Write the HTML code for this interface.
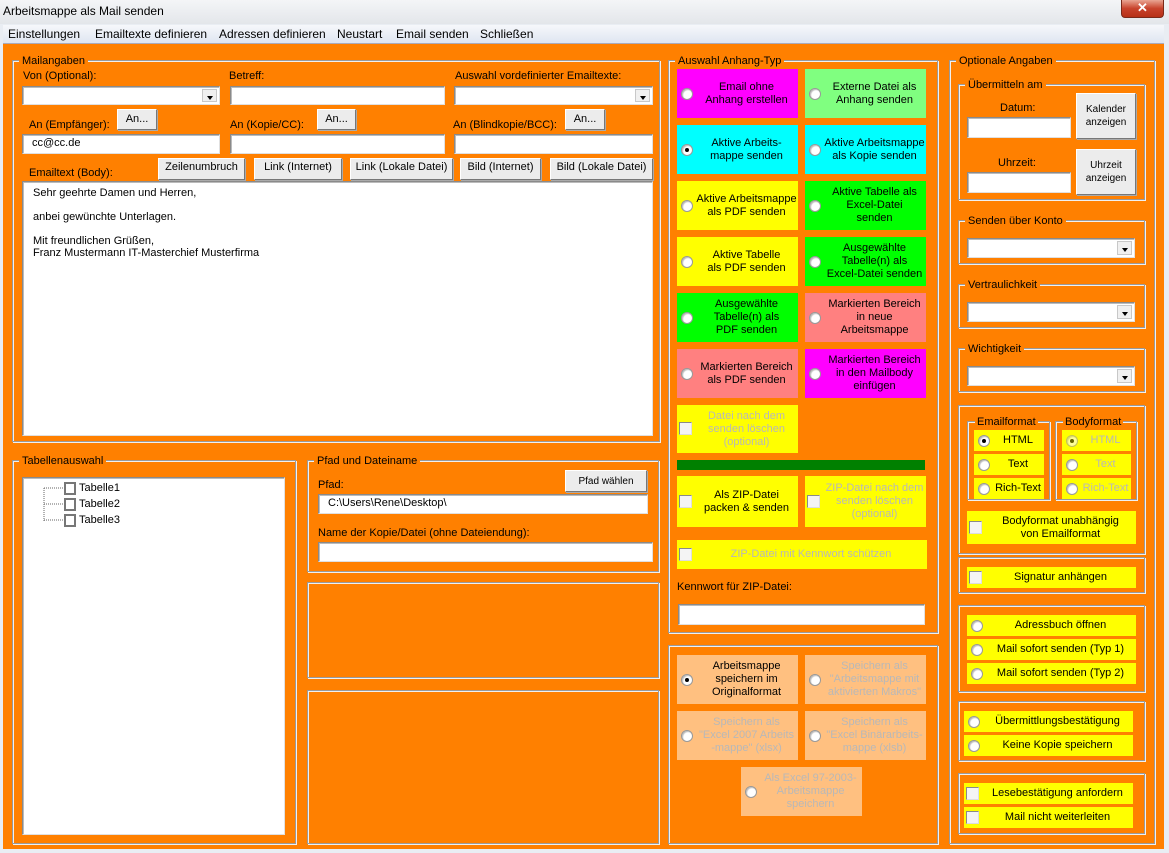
<!DOCTYPE html>
<html><head><meta charset="utf-8"><style>
*{box-sizing:border-box}
body{margin:0;width:1169px;height:853px;overflow:hidden;background:#e9edf3;font-family:"Liberation Sans",sans-serif;font-size:11px;color:#000;position:relative}
.a{position:absolute}
.title{left:0;top:0;width:1169px;height:24px;background:linear-gradient(#f4f5f7,#e3e6ea);}
.close{left:1121px;top:0;width:43px;height:18px;background:linear-gradient(#e9a593,#c8432c 50%,#b73017);border:1px solid #7a2a1a;border-top:none;border-radius:0 0 4px 4px;color:#fff;font-weight:bold;text-align:center;font-size:13px;line-height:16px}
.menu{left:3px;top:25px;width:1161px;height:19px;background:linear-gradient(#f6f8fb,#dfe6f1);border-bottom:1px solid #aab;font-size:12px;line-height:19px}
.menu span{position:absolute;top:0}
.main{left:3px;top:44px;width:1161px;height:805px;background:#ff8000}
.fs{position:absolute;border:1px solid #9a9a9a;box-shadow:inset 1px 1px 0 #f0f0f0,1px 1px 0 #f0f0f0}
.lg{position:absolute;background:#ff8000;padding:0 3px;line-height:12px;font-size:11px;top:-6px;left:6px;white-space:nowrap}
.in{position:absolute;background:#fff;border:1px solid #8a8a8a;border-right-color:#e0e0e0;border-bottom-color:#e0e0e0;box-shadow:inset 1px 1px 0 #bbb;padding-left:9px;line-height:17px}
.dd{position:absolute;right:2px;top:2px;bottom:2px;width:15px;background:#f0f0f0;border:1px solid #c8c8c8}
.dd:after{content:"";position:absolute;left:4px;top:6px;border:3px solid transparent;border-top:4px solid #000}
.bt{position:absolute;background:#ececec;border:1px solid #fff;border-right-color:#777;border-bottom-color:#777;box-shadow:1px 1px 0 #aaa;text-align:center;display:flex;align-items:center;justify-content:center;line-height:13px}
.t{position:absolute}
.tile{position:absolute;display:flex;align-items:center;text-align:center;line-height:13px}
.tile .x{flex:1;padding-left:18px}
.r{position:absolute;left:4px;top:50%;margin-top:-6px;width:12px;height:12px;border-radius:50%;background:#fff;border:1px solid #999;box-shadow:inset 1px 1px 1px #bbb}
.r.on:after{content:"";position:absolute;left:3px;top:3px;width:4px;height:4px;border-radius:50%;background:#000}
.c{position:absolute;left:2px;top:50%;margin-top:-7px;width:13px;height:13px;background:#f4f4f4;border:1px solid #8a8a8a;border-right-color:#ddd;border-bottom-color:#ddd}
.dis{color:#b8b8b8}
.m{background:#ff00ff}.g{background:#80ff80}.cy{background:#00ffff}.y{background:#ffff00}.gr{background:#00ff00}.p{background:#ff8080}.lo{background:#ffc080}
</style></head><body>
<div class="a title"><span class="a" style="left:3px;top:4px;font-size:12px">Arbeitsmappe als Mail senden</span></div>
<div class="a close">✕</div>
<div class="a menu"><span style="left:5px">Einstellungen</span><span style="left:92px">Emailtexte definieren</span><span style="left:216px">Adressen definieren</span><span style="left:334px">Neustart</span><span style="left:393px">Email senden</span><span style="left:477px">Schließen</span></div>
<div class="a main"></div>

<!-- Mailangaben -->
<div class="fs" style="left:12px;top:60px;width:648px;height:382px"><span class="lg">Mailangaben</span></div>
<span class="t" style="left:23px;top:70px">Von (Optional):</span>
<span class="t" style="left:229px;top:70px">Betreff:</span>
<span class="t" style="left:455px;top:70px">Auswahl vordefinierter Emailtexte:</span>
<div class="in" style="left:22px;top:86px;width:198px;height:19px"><div class="dd"></div></div>
<div class="in" style="left:230px;top:86px;width:215px;height:19px"></div>
<div class="in" style="left:454px;top:86px;width:199px;height:19px"><div class="dd"></div></div>
<span class="t" style="left:29px;top:119px">An (Empfänger):</span>
<div class="bt" style="left:117px;top:109px;width:40px;height:21px">An...</div>
<span class="t" style="left:230px;top:119px">An (Kopie/CC):</span>
<div class="bt" style="left:317px;top:109px;width:39px;height:21px">An...</div>
<span class="t" style="left:453px;top:119px">An (Blindkopie/BCC):</span>
<div class="bt" style="left:565px;top:109px;width:40px;height:21px">An...</div>
<div class="in" style="left:22px;top:134px;width:198px;height:20px">cc@cc.de</div>
<div class="in" style="left:230px;top:134px;width:215px;height:20px"></div>
<div class="in" style="left:454px;top:134px;width:199px;height:20px"></div>
<span class="t" style="left:29px;top:167px">Emailtext (Body):</span>
<div class="bt" style="left:158px;top:158px;width:87px;height:22px;align-items:flex-start;padding-top:2px">Zeilenumbruch</div>
<div class="bt" style="left:254px;top:158px;width:88px;height:22px;align-items:flex-start;padding-top:2px">Link (Internet)</div>
<div class="bt" style="left:350px;top:158px;width:103px;height:22px;align-items:flex-start;padding-top:2px">Link (Lokale Datei)</div>
<div class="bt" style="left:460px;top:158px;width:81px;height:22px;align-items:flex-start;padding-top:2px">Bild (Internet)</div>
<div class="bt" style="left:550px;top:158px;width:103px;height:22px;align-items:flex-start;padding-top:2px">Bild (Lokale Datei)</div>
<div class="in" style="left:22px;top:181px;width:631px;height:255px;line-height:12px;padding:5px 0 0 10px">Sehr geehrte Damen und Herren,<br><br>anbei gewünchte Unterlagen.<br><br>Mit freundlichen Grüßen,<br>Franz Mustermann IT-Masterchief Musterfirma</div>

<!-- Tabellenauswahl -->
<div class="fs" style="left:12px;top:460px;width:284px;height:384px"><span class="lg">Tabellenauswahl</span></div>
<div class="in" style="left:22px;top:477px;width:263px;height:358px;padding:0"></div>
<svg class="a" style="left:40px;top:480px" width="100" height="50"><path d="M4 8V42M4 8H24M4 24H24M4 40H24" stroke="#666" stroke-dasharray="1 1" fill="none"/>
<rect x="25" y="3" width="10" height="11" fill="#fff" stroke="#777" stroke-width="2"/><rect x="25" y="19" width="10" height="11" fill="#fff" stroke="#777" stroke-width="2"/><rect x="25" y="35" width="10" height="11" fill="#fff" stroke="#777" stroke-width="2"/></svg>
<span class="t" style="left:79px;top:482px">Tabelle1</span>
<span class="t" style="left:79px;top:498px">Tabelle2</span>
<span class="t" style="left:79px;top:514px">Tabelle3</span>

<!-- Pfad -->
<div class="fs" style="left:307px;top:460px;width:352px;height:112px"><span class="lg">Pfad und Dateiname</span></div>
<span class="t" style="left:318px;top:479px">Pfad:</span>
<div class="bt" style="left:565px;top:470px;width:82px;height:22px;font-size:10px">Pfad wählen</div>
<div class="in" style="left:318px;top:494px;width:330px;height:20px">C:\Users\Rene\Desktop\</div>
<span class="t" style="left:318px;top:527px">Name der Kopie/Datei (ohne Dateiendung):</span>
<div class="in" style="left:318px;top:542px;width:335px;height:20px"></div>
<div class="fs" style="left:307px;top:582px;width:352px;height:96px"></div>
<div class="fs" style="left:307px;top:690px;width:352px;height:154px"></div>

<!-- Auswahl Anhang-Typ -->
<div class="fs" style="left:668px;top:60px;width:270px;height:573px"><span class="lg">Auswahl Anhang-Typ</span></div>
<div class="tile m" style="left:677px;top:69px;width:121px;height:49px"><i class="r"></i><div class="x">Email ohne<br>Anhang erstellen</div></div>
<div class="tile g" style="left:805px;top:69px;width:121px;height:49px"><i class="r"></i><div class="x">Externe Datei als<br>Anhang senden</div></div>
<div class="tile cy" style="left:677px;top:125px;width:121px;height:49px"><i class="r on"></i><div class="x">Aktive Arbeits-<br>mappe senden</div></div>
<div class="tile cy" style="left:805px;top:125px;width:121px;height:49px"><i class="r"></i><div class="x">Aktive Arbeitsmappe<br>als Kopie senden</div></div>
<div class="tile y" style="left:677px;top:181px;width:121px;height:49px"><i class="r"></i><div class="x">Aktive Arbeitsmappe<br>als PDF senden</div></div>
<div class="tile gr" style="left:805px;top:181px;width:121px;height:49px"><i class="r"></i><div class="x">Aktive Tabelle als<br>Excel-Datei<br>senden</div></div>
<div class="tile y" style="left:677px;top:237px;width:121px;height:49px"><i class="r"></i><div class="x">Aktive Tabelle<br>als PDF senden</div></div>
<div class="tile gr" style="left:805px;top:237px;width:121px;height:49px"><i class="r"></i><div class="x">Ausgewählte<br>Tabelle(n) als<br>Excel-Datei senden</div></div>
<div class="tile gr" style="left:677px;top:293px;width:121px;height:49px"><i class="r"></i><div class="x">Ausgewählte<br>Tabelle(n) als<br>PDF senden</div></div>
<div class="tile p" style="left:805px;top:293px;width:121px;height:49px"><i class="r"></i><div class="x">Markierten Bereich<br>in neue<br>Arbeitsmappe</div></div>
<div class="tile p" style="left:677px;top:349px;width:121px;height:49px"><i class="r"></i><div class="x">Markierten Bereich<br>als PDF senden</div></div>
<div class="tile m" style="left:805px;top:349px;width:121px;height:49px"><i class="r"></i><div class="x">Markierten Bereich<br>in den Mailbody<br>einfügen</div></div>
<div class="tile y dis" style="left:677px;top:405px;width:121px;height:48px"><i class="c"></i><div class="x">Datei nach dem<br>senden löschen<br>(optional)</div></div>
<div class="a" style="left:677px;top:460px;width:248px;height:10px;background:#008000"></div>
<div class="tile y" style="left:677px;top:476px;width:121px;height:51px"><i class="c"></i><div class="x">Als ZIP-Datei<br>packen &amp; senden</div></div>
<div class="tile y dis" style="left:805px;top:476px;width:121px;height:51px"><i class="c"></i><div class="x">ZIP-Datei nach dem<br>senden löschen<br>(optional)</div></div>
<div class="tile y dis" style="left:677px;top:540px;width:250px;height:29px"><i class="c"></i><div class="x">ZIP-Datei mit Kennwort schützen</div></div>
<span class="t" style="left:677px;top:581px">Kennwort für ZIP-Datei:</span>
<div class="in" style="left:678px;top:604px;width:247px;height:21px"></div>

<div class="fs" style="left:668px;top:645px;width:270px;height:199px"></div>
<div class="tile lo" style="left:677px;top:655px;width:121px;height:49px"><i class="r on"></i><div class="x">Arbeitsmappe<br>speichern im<br>Originalformat</div></div>
<div class="tile lo dis" style="left:805px;top:655px;width:121px;height:49px"><i class="r"></i><div class="x">Speichern als<br>"Arbeitsmappe mit<br>aktivierten Makros"</div></div>
<div class="tile lo dis" style="left:677px;top:711px;width:121px;height:49px"><i class="r"></i><div class="x">Speichern als<br>"Excel 2007 Arbeits<br>-mappe" (xlsx)</div></div>
<div class="tile lo dis" style="left:805px;top:711px;width:121px;height:49px"><i class="r"></i><div class="x">Speichern als<br>"Excel Binärarbeits-<br>mappe (xlsb)</div></div>
<div class="tile lo dis" style="left:741px;top:767px;width:121px;height:49px"><i class="r"></i><div class="x">Als Excel 97-2003-<br>Arbeitsmappe<br>speichern</div></div>

<!-- Optionale Angaben -->
<div class="fs" style="left:949px;top:60px;width:206px;height:784px"><span class="lg">Optionale Angaben</span></div>
<div class="fs" style="left:958px;top:84px;width:187px;height:116px"><span class="lg">Übermitteln am</span></div>
<span class="t" style="left:1000px;top:102px">Datum:</span>
<div class="in" style="left:967px;top:117px;width:104px;height:21px"></div>
<div class="bt" style="left:1076px;top:93px;width:60px;height:46px;font-size:10px">Kalender<br>anzeigen</div>
<span class="t" style="left:998px;top:157px">Uhrzeit:</span>
<div class="in" style="left:967px;top:172px;width:104px;height:21px"></div>
<div class="bt" style="left:1076px;top:149px;width:60px;height:46px;font-size:10px">Uhrzeit<br>anzeigen</div>

<div class="fs" style="left:958px;top:220px;width:187px;height:44px"><span class="lg">Senden über Konto</span></div>
<div class="in" style="left:967px;top:238px;width:168px;height:20px"><div class="dd"></div></div>
<div class="fs" style="left:958px;top:284px;width:187px;height:44px"><span class="lg">Vertraulichkeit</span></div>
<div class="in" style="left:967px;top:302px;width:168px;height:20px"><div class="dd"></div></div>
<div class="fs" style="left:958px;top:348px;width:187px;height:44px"><span class="lg">Wichtigkeit</span></div>
<div class="in" style="left:967px;top:366px;width:168px;height:20px"><div class="dd"></div></div>

<div class="fs" style="left:958px;top:405px;width:187px;height:149px"></div>
<div class="fs" style="left:967px;top:421px;width:83px;height:79px"><span class="lg" style="left:7px;padding:0 2px">Emailformat</span></div>
<div class="fs" style="left:1055px;top:421px;width:82px;height:79px"><span class="lg" style="left:7px;padding:0 2px">Bodyformat</span></div>
<div class="tile y" style="left:974px;top:430px;width:70px;height:21px"><i class="r on"></i><div class="x">HTML</div></div>
<div class="tile y" style="left:974px;top:454px;width:70px;height:21px"><i class="r"></i><div class="x">Text</div></div>
<div class="tile y" style="left:974px;top:478px;width:70px;height:21px"><i class="r"></i><div class="x">Rich-Text</div></div>
<div class="tile y dis" style="left:1062px;top:430px;width:69px;height:21px"><i class="r on" style="opacity:.6"></i><div class="x">HTML</div></div>
<div class="tile y dis" style="left:1062px;top:454px;width:69px;height:21px"><i class="r"></i><div class="x">Text</div></div>
<div class="tile y dis" style="left:1062px;top:478px;width:69px;height:21px"><i class="r"></i><div class="x">Rich-Text</div></div>
<div class="tile y" style="left:967px;top:511px;width:169px;height:33px"><i class="c"></i><div class="x">Bodyformat unabhängig<br>von Emailformat</div></div>

<div class="fs" style="left:958px;top:557px;width:187px;height:36px"></div>
<div class="tile y" style="left:967px;top:567px;width:169px;height:21px"><i class="c"></i><div class="x">Signatur anhängen</div></div>

<div class="fs" style="left:958px;top:605px;width:187px;height:87px"></div>
<div class="tile y" style="left:967px;top:615px;width:169px;height:21px"><i class="r"></i><div class="x">Adressbuch öffnen</div></div>
<div class="tile y" style="left:967px;top:639px;width:169px;height:21px"><i class="r"></i><div class="x">Mail sofort senden (Typ 1)</div></div>
<div class="tile y" style="left:967px;top:663px;width:169px;height:21px"><i class="r"></i><div class="x">Mail sofort senden (Typ 2)</div></div>

<div class="fs" style="left:958px;top:701px;width:187px;height:60px"></div>
<div class="tile y" style="left:964px;top:711px;width:169px;height:21px"><i class="r"></i><div class="x">Übermittlungsbestätigung</div></div>
<div class="tile y" style="left:964px;top:735px;width:169px;height:21px"><i class="r"></i><div class="x">Keine Kopie speichern</div></div>

<div class="fs" style="left:958px;top:773px;width:187px;height:61px"></div>
<div class="tile y" style="left:964px;top:783px;width:169px;height:21px"><i class="c"></i><div class="x">Lesebestätigung anfordern</div></div>
<div class="tile y" style="left:964px;top:807px;width:169px;height:21px"><i class="c"></i><div class="x">Mail nicht weiterleiten</div></div>
</body></html>
